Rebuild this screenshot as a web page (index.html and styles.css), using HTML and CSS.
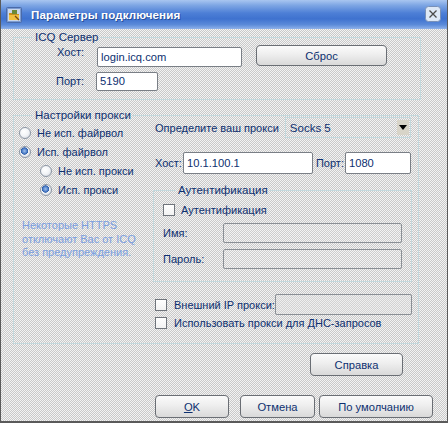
FILE: index.html
```html
<!DOCTYPE html>
<html lang="ru">
<head>
<meta charset="utf-8">
<title>Параметры подключения</title>
<link rel="stylesheet" href="styles.css">
</head>
<body>
<div class="window">
  <div class="titlebar">
    <span class="appicon">
      <svg width="16" height="16" viewBox="0 0 16 16">
        <rect x="0.5" y="0.5" width="15" height="15" rx="1" fill="#7c9bd0" stroke="#4a6aa8"/>
        <rect x="2" y="2" width="12" height="12" fill="#c9d6ea"/>
        <path d="M3 6 h4 l1 1 h5 v6 h-10z" fill="#c8901e"/>
        <path d="M3 8 h10 v5 h-10z" fill="#f0c040"/>
        <rect x="6" y="3" width="5" height="4" fill="#6a8a3a"/>
        <path d="M9 9 l4 4" stroke="#7a4a10" stroke-width="1.2"/>
      </svg>
    </span>
    <span class="title">Параметры подключения</span>
    <span class="close">
      <svg width="16" height="16" viewBox="0 0 16 16">
        <rect x="0.5" y="0.5" width="15" height="15" rx="3" fill="#dde8f6" stroke="#7890b8"/>
        <path d="M4.5 4.5 L11.5 11.5 M11.5 4.5 L4.5 11.5" stroke="#4a4a4a" stroke-width="1.3"/>
      </svg>
    </span>
  </div>

  <div class="content">
    <div class="group icq">
      <div class="legend">ICQ Сервер</div>
      <div class="row icq-host">
        <span class="lbl">Хост:</span>
        <span class="input host">login.icq.com</span>
        <span class="btn reset">Сброс</span>
      </div>
      <div class="row icq-port">
        <span class="lbl">Порт:</span>
        <span class="input port">5190</span>
      </div>
    </div>

    <div class="group proxy">
      <div class="col-left">
        <div class="legend">Настройки прокси</div>
        <div class="radio-row"><span class="radio"></span><span>Не исп. файрвол</span></div>
        <div class="radio-row"><span class="radio on"></span><span>Исп. файрвол</span></div>
        <div class="radio-row sub"><span class="radio"></span><span>Не исп. прокси</span></div>
        <div class="radio-row sub"><span class="radio on"></span><span>Исп. прокси</span></div>
        <p class="note">Некоторые HTTPS<br>отключают Вас от ICQ<br>без предупреждения.</p>
      </div>
      <div class="col-right">
        <div class="row type-row">
          <span class="type-lbl">Определите ваш прокси</span>
          <span class="select">
            <span class="select-val">Socks 5</span>
            <span class="select-arrow"></span>
          </span>
        </div>
        <div class="row addr-row">
          <span class="addr-lbl">Хост:</span>
          <span class="input phost">10.1.100.1</span>
          <span class="addr-lbl port-lbl">Порт:</span>
          <span class="input pport">1080</span>
        </div>
        <div class="group auth">
          <div class="legend">Аутентификация</div>
          <div class="check-row auth-check"><span class="check"></span><span>Аутентификация</span></div>
          <div class="row cred-row">
            <span class="cred-lbl">Имя:</span>
            <span class="input disabled cred"></span>
          </div>
          <div class="row cred-row">
            <span class="cred-lbl">Пароль:</span>
            <span class="input disabled cred"></span>
          </div>
        </div>
        <div class="row ext-row">
          <span class="check"></span>
          <span class="ext-lbl">Внешний IP прокси:</span>
          <span class="input disabled ext"></span>
        </div>
        <div class="check-row dns-row"><span class="check"></span><span>Использовать прокси для ДНС-запросов</span></div>
      </div>
    </div>

    <div class="help-row"><span class="btn help">Справка</span></div>

    <div class="footer">
      <span class="btn ok"><u>O</u>K</span>
      <span class="btn cancel">Отмена</span>
      <span class="btn defaults">По умолчанию</span>
    </div>
  </div>
</div>
</body>
</html>
```

FILE: styles.css
```css
* { box-sizing: border-box; }

html, body {
  margin: 0;
  padding: 0;
  width: 448px;
  height: 423px;
  overflow: hidden;
}

body {
  font-family: "Liberation Sans", Arial, sans-serif;
  font-size: 11px;
  color: #0d3070;
  background: #dcdcdc;
}

.window {
  width: 448px;
  height: 423px;
  border-left: 1px solid #5a5a5a;
  border-right: 1px solid #5a5a5a;
  border-bottom: 2px solid #5a5a5a;
  background-image: repeating-conic-gradient(#c9c9c9 0 25%, #f3f3f3 0 50%);
  background-size: 2px 2px;
  background-attachment: fixed;
  display: flex;
  flex-direction: column;
}

.titlebar {
  height: 29px;
  flex: none;
  display: flex;
  align-items: center;
  background: linear-gradient(#a9c6f0 0%, #7ea6e4 18%, #4d7fd6 45%, #3f72cf 65%, #5a8ad9 85%, #8fb2ea 100%);
  padding-left: 5px;
  padding-right: 6px;
}

.appicon {
  width: 16px;
  height: 16px;
  display: block;
}
.appicon svg, .close svg { display: block; }

.title {
  margin-left: 9px;
  color: #ffffff;
  font-weight: bold;
  font-size: 11.6px;
  letter-spacing: 0.1px;
  text-shadow: 1px 1px 0 #2a4f98;
}

.close {
  margin-left: auto;
  width: 16px;
  height: 16px;
  margin-top: -1px;
}

.content {
  flex: 1;
  display: flex;
  flex-direction: column;
}

.group {
  border: 1px solid #c3d9de;
}

.legend {
  height: 14px;
  line-height: 14px;
  margin-top: -8px;
  padding: 0 2px;
  width: fit-content;
  background-image: repeating-conic-gradient(#c9c9c9 0 25%, #f3f3f3 0 50%);
  background-size: 2px 2px;
  background-attachment: fixed;
  white-space: nowrap;
  font-size: 11.5px;
}

.row {
  display: flex;
  align-items: flex-start;
}

.lbl {
  width: 70px;
  text-align: right;
  line-height: 14px;
}

.input {
  display: block;
  background: #ffffff;
  border: 1px solid #7a7f86;
  border-radius: 2px;
  padding-left: 3px;
  white-space: nowrap;
  font-size: 11.2px;
  color: #0d3070;
}

.input.disabled {
  background-image: repeating-conic-gradient(#cdcdcd 0 25%, #f4f4f4 0 50%);
  background-size: 2px 2px;
  background-attachment: fixed;
  border-color: #8a8f95;
}

.btn {
  display: flex;
  align-items: center;
  justify-content: center;
  height: 22px;
  border: 1px solid #6a6e74;
  border-radius: 4px;
  background: linear-gradient(#fbfbfb 0%, #eeeeee 45%, #d9d9d9 100%);
  color: #0d3070;
  font-size: 11.2px;
}

/* ICQ group */
.icq {
  margin: 8px 0 0 12px;
  width: 408px;
  padding-bottom: 8px;
}
.icq .legend { margin-left: 19px; }

.icq-host { margin-top: 1px; }
.icq-host .host {
  margin: 2px 0 0 13px;
  width: 145px;
  height: 20px;
  line-height: 18px;
}
.icq-host .reset {
  margin-left: 14px;
  width: 131px;
  height: 21px;
}
.icq-port { margin-top: 5px; }
.icq-port .lbl { margin-top: 2px; }
.icq-port .port {
  margin-left: 12px;
  width: 62px;
  height: 19px;
  line-height: 17px;
}

/* Proxy group */
.proxy {
  margin: 15px 0 0 12px;
  width: 406px;
  height: 229px;
  display: flex;
  padding-right: 7px;
}

.col-left {
  width: 139px;
  flex: none;
}
.col-left .legend { margin-left: 19px; }

.radio-row {
  display: flex;
  align-items: center;
  height: 19px;
  padding-left: 5px;
}
.col-left .legend + .radio-row { margin-top: 1px; }
.radio-row.sub { padding-left: 26px; }

.radio {
  width: 12px;
  height: 12px;
  border-radius: 50%;
  border: 1px solid #8c96a4;
  background: radial-gradient(circle at 40% 35%, #ffffff 0%, #f2f4f7 50%, #c9ced6 100%);
  margin-right: 6px;
  flex: none;
}
.radio.on {
  background:
    radial-gradient(circle at 45% 40%, #9fc2f0 0%, #4f7fc7 30%, #2d5ca8 42%, transparent 48%),
    radial-gradient(circle at 40% 35%, #ffffff 0%, #eef1f5 55%, #c4cad3 100%);
}

.note {
  margin: 20px 0 0 8px;
  line-height: 13.5px;
  color: #7a9ee0;
  font-size: 11px;
}

.col-right {
  flex: 1;
  display: flex;
  flex-direction: column;
}

.type-row {
  margin-top: 1px;
  align-items: center;
  padding-left: 2px;
}
.type-lbl { white-space: nowrap; }

.select {
  margin-left: auto;
  margin-right: 1px;
  width: 126px;
  height: 21px;
  display: flex;
  align-items: center;
  border: 1px solid #c3d9de;
  padding-left: 4px;
  padding-right: 1px;
  font-size: 11.5px;
}
.select-val { flex: 1; }
.select-arrow {
  width: 12px;
  height: 15px;
  background: #d8d4c8;
  display: flex;
  align-items: center;
  justify-content: center;
}
.select-arrow::before {
  content: "";
  width: 0;
  height: 0;
  border-left: 4px solid transparent;
  border-right: 4px solid transparent;
  border-top: 5px solid #000;
}

.addr-row {
  margin-top: 14px;
  align-items: center;
  padding-left: 2px;
}
.addr-lbl { white-space: nowrap; }
.phost {
  margin-left: 1px;
  width: 130px;
  height: 22px;
  line-height: 20px;
}
.port-lbl { margin-left: 3px; }
.pport {
  margin-left: 1px;
  width: 66px;
  height: 22px;
  line-height: 20px;
}

.auth {
  margin-top: 16px;
  padding: 0 8px 12px 9px;
}
.auth .legend { margin-left: 13px; }

.check-row {
  display: flex;
  align-items: center;
  height: 14px;
}
.check {
  width: 12px;
  height: 12px;
  border: 1px solid #6f747b;
  background: linear-gradient(#ffffff, #f2f2f2);
  flex: none;
}
.auth-check { margin-top: 6px; }
.auth-check .check { margin-right: 6px; }

.cred-row {
  margin-top: 6px;
  align-items: center;
}
.cred-lbl {
  width: 60px;
  flex: none;
}
.cred {
  width: 179px;
  height: 20px;
}

.ext-row {
  margin-top: 12px;
  align-items: center;
  padding-left: 2px;
}
.ext-row .check { margin-right: 7px; }
.ext-lbl { white-space: nowrap; }
.ext {
  margin-left: auto;
  width: 137px;
  height: 21px;
}

.dns-row {
  margin-top: 1px;
  padding-left: 2px;
}
.dns-row .check { margin-right: 7px; }

.help-row {
  display: flex;
  justify-content: flex-end;
  margin-top: 9px;
  padding-right: 44px;
}
.help { width: 93px; height: 23px; }

.footer {
  display: flex;
  justify-content: flex-end;
  margin-top: 19px;
  padding-right: 14px;
}
.ok { width: 74px; height: 23px; }
.cancel { width: 75px; height: 23px; margin-left: 11px; }
.defaults { width: 114px; height: 23px; margin-left: 4px; }
```
